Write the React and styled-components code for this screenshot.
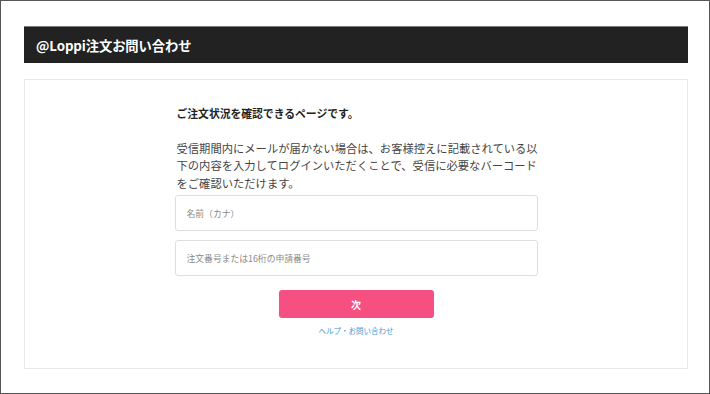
import React from 'react';
import styled, { createGlobalStyle } from 'styled-components';

const GlobalStyle = createGlobalStyle`
  html, body {
    margin: 0;
    padding: 0;
    background: #fff;
  }
  body {
    font-family: "Noto Sans CJK JP", "Noto Sans", sans-serif;
    color: #333;
  }
  * {
    box-sizing: border-box;
  }
`;

const Frame = styled.div`
  width: 710px;
  height: 394px;
  border: 1px solid #555;
  padding: 25px 21px 0 23px;
  display: flex;
  flex-direction: column;
  gap: 16px;
  overflow: hidden;
`;

const Header = styled.header`
  height: 37px;
  background: #222;
  border-top: 1px solid #7a7a7a;
  display: flex;
  align-items: center;
  padding: 0 0 0 12px;
`;

const Title = styled.h1`
  margin: 0;
  font-size: 13.3px;
  font-weight: 700;
  color: #fff;
  letter-spacing: -0.1px;
`;

const Card = styled.main`
  height: 290px;
  border: 1px solid #e8e8e8;
  display: flex;
  justify-content: center;
  padding-top: 25px;
`;

const Column = styled.div`
  width: 363px;
  display: flex;
  flex-direction: column;
`;

const Lead = styled.h2`
  margin: 0;
  font-size: 10.8px;
  line-height: 17.5px;
  font-weight: 700;
  color: #222;
  padding-left: 2px;
`;

const Note = styled.p`
  margin: 17px 0 3px;
  font-size: 11.3px;
  line-height: 17.6px;
  color: #444;
  padding-left: 2px;
  white-space: nowrap;
`;

const Field = styled.input`
  height: 36px;
  width: 100%;
  border: 1px solid #dedede;
  border-radius: 3px;
  padding: 0 11px;
  margin-top: ${p => p.$gap}px;
  font-family: inherit;
  font-size: 8.8px;
  color: #333;
  outline: none;
  &::placeholder {
    color: #8a8a8a;
  }
`;

const Actions = styled.div`
  display: flex;
  flex-direction: column;
  align-items: center;
  margin-top: 14px;
  gap: 7px;
`;

const NextButton = styled.button`
  width: 155px;
  height: 28px;
  border: none;
  border-radius: 3px;
  background: #f65083;
  color: #fff;
  font-family: inherit;
  font-size: 10px;
  font-weight: 700;
  cursor: pointer;
`;

const HelpLink = styled.a`
  font-size: 7.5px;
  line-height: 12px;
  color: #3d9ad8;
  text-decoration: none;
`;

export default function App() {
  return (
    <>
      <GlobalStyle />
      <Frame>
        <Header>
          <Title>@Loppi注文お問い合わせ</Title>
        </Header>
        <Card>
          <Column>
            <Lead>ご注文状況を確認できるページです。</Lead>
            <Note>
              受信期間内にメールが届かない場合は、お客様控えに記載されている以<br />
              下の内容を入力してログインいただくことで、受信に必要なバーコード<br />
              をご確認いただけます。
            </Note>
            <Field $gap={0} placeholder="名前（カナ）" />
            <Field $gap={9} placeholder="注文番号または16桁の申請番号" />
            <Actions>
              <NextButton type="button">次</NextButton>
              <HelpLink href="#">ヘルプ・お問い合わせ</HelpLink>
            </Actions>
          </Column>
        </Card>
      </Frame>
    </>
  );
}
